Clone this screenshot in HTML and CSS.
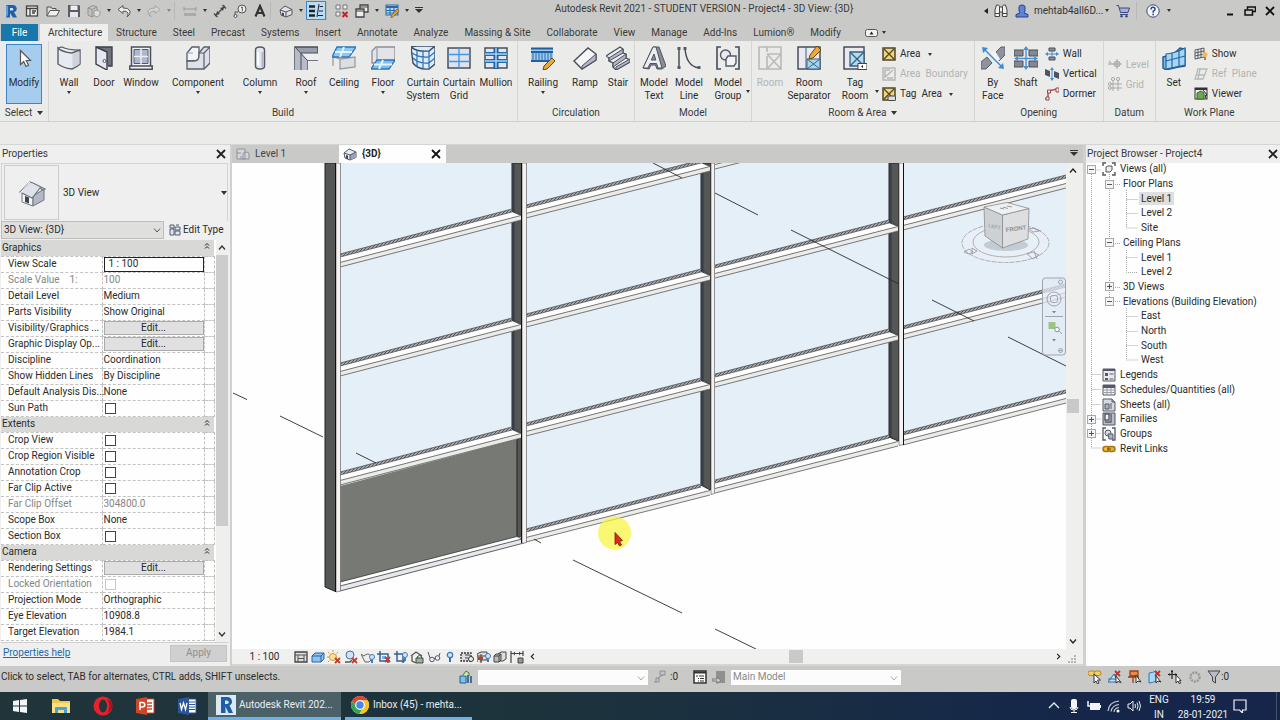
FILE: index.html
```html
<!DOCTYPE html>
<html lang="en">
<head>
<meta charset="utf-8">
<title>Autodesk Revit 2021</title>
<link rel="stylesheet" href="styles.css">
</head>
<body>
<header class="titlebar">
  <div class="qat">
    <button class="q w22" aria-label="Revit"><svg class="i16" viewBox="0 0 16 16"><path d="M3 2h6.500a4 3.600 0 0 1 1.500 7l3 5.500h-4L7 10v4.500H3z" fill="#1d5fa8"/><path d="M7 5h2a1.200 1.200 0 0 1 0 2.500H7z" fill="#cfe3f4"/><path d="M3 2v12.500L5 12V3z" fill="#5ea0dc"/></svg></button>
    <button class="q w20" aria-label="Home"><svg class="i14" viewBox="0 0 14 14"><rect x="1.500" y="2" width="11" height="10" fill="#eee" stroke="#444" stroke-width="1.300"/><path d="M1 4.500h12M5 4.500V12M7 7h4M7 9h3" stroke="#444" stroke-width="1.300"/></svg></button>
    <button class="q w22" aria-label="Open"><svg class="i14" viewBox="0 0 14 14"><path d="M1 12V3h4l1 1.500h4V7" fill="#ddd" stroke="#555"/><path d="M1 12l3-5.500h9.500L10.500 12z" fill="#f2f2f2" stroke="#555"/></svg></button>
    <button class="q w20" aria-label="Save"><svg class="i14" viewBox="0 0 14 14"><path d="M1 1h11l1 1v11H1z" fill="#5a5d66"/><rect x="3.500" y="1.500" width="7" height="4.500" fill="#eee"/><rect x="3" y="8" width="8" height="5" fill="#e8e8e8"/></svg></button>
    <button class="q w20" aria-label="Synchronize"><svg class="i14" viewBox="0 0 14 14"><path d="M1 4l5-2.500 4 1.500v7l-5 3-4-2zM1 4l4 1.500L10 3M5 5.500V13" fill="#c2c2c2" stroke="#929292"/><path d="M7 7l3-1 3 1.500V11l-3 2-3-1.500z" fill="#ddd" stroke="#999"/></svg></button>
    <button class="q w10" aria-label="Synchronize options"><i class="dd"></i></button>
    <button class="q w20" aria-label="Undo"><svg class="i14" viewBox="0 0 14 14"><path d="M6 1.500L1 5.500l5 4V7.200q4-.7 5 1.800.6 1.700-1 4 4-2.500 3-6Q11.500 3.500 6 4z" fill="#eee" stroke="#555"/></svg></button>
    <button class="q w10" aria-label="Undo history"><i class="dd"></i></button>
    <button class="q w20" aria-label="Redo"><svg class="i14" viewBox="0 0 14 14"><path d="M8 1.500l5 4-5 4V7.200Q4 6.500 3 9q-.6 1.700 1 4-4-2.500-3-6Q2.500 3.500 8 4z" fill="#d3d3d3" stroke="#a6a6a6"/></svg></button>
    <button class="q w10" aria-label="Redo history"><i class="dd dim"></i></button>
    <span class="sep"></span>
    <button class="q w20" aria-label="Measure"><svg class="i14" viewBox="0 0 14 14"><path d="M1 5h12M1 3v4M13 3v4" stroke="#999"/><rect x="1" y="9" width="12" height="3" fill="#aaa"/></svg></button>
    <button class="q w10" aria-label="Measure options"><i class="dd"></i></button>
    <button class="q w20" aria-label="Aligned dimension"><svg class="i14" viewBox="0 0 14 14"><path d="M2 12L12 2M1 9.500L4.500 13M9.500 1L13 4.500" stroke="#444" stroke-width="1.300"/><path d="M3 11l1-4 3 3zM11 3l-1 4-3-3z" fill="#444"/></svg></button>
    <button class="q w20" aria-label="Tag by category"><svg class="i14" viewBox="0 0 14 14"><circle cx="9" cy="5" r="4" fill="#eee" stroke="#555"/><path d="M8 3.500L9.300 3v4.500M5 8L2 8v4" fill="none" stroke="#555"/><circle cx="2.500" cy="12" r="1.500" fill="#eee" stroke="#555"/></svg></button>
    <button class="q w20" aria-label="Text"><svg class="i14" viewBox="0 0 14 14"><path d="M2.500 12.500L7 2l4.500 10.500M4.200 9h5.600" fill="none" stroke="#333" stroke-width="2.200"/></svg></button>
    <span class="sep"></span>
    <button class="q w20" aria-label="Default 3D view"><svg class="i14" viewBox="0 0 14 14"><path d="M1 6l5-4 7 3.500v5L7 13l-5-2z" fill="#dfe1e8" stroke="#555"/><path d="M1 6l6 2 6-2.500M7 8v5" fill="none" stroke="#555"/><path d="M3 8.500l2 .7v3l-2-.7z" fill="#444"/></svg></button>
    <button class="q w10" aria-label="View options"><i class="dd"></i></button>
    <button class="q w20 boxed" aria-label="Thin lines"><svg class="i16" viewBox="0 0 16 16"><path d="M1 3.500h6M1 8h6M1 12.500h6" stroke="#222" stroke-width="2.500"/><path d="M9 14L11 1M11.500 3.500H15M11 8h4M10 12.500h5" stroke="#223" fill="none"/></svg></button>
    <span class="sep"></span>
    <button class="q w20" aria-label="Close inactive views"><svg class="i14" viewBox="0 0 14 14"><path d="M1 1h4v4H1zM8 1h4v4H8zM1 8h4v4H1z" fill="#eee" stroke="#777"/><path d="M7.500 8l5 5M12.500 8l-5 5" stroke="#c4252b" stroke-width="2"/></svg></button>
    <button class="q w20" aria-label="Switch windows"><svg class="i14" viewBox="0 0 14 14"><path d="M5 1h8v7H5z" fill="#eee" stroke="#444" stroke-width="1.300"/><path d="M1 5h8v8H1z" fill="#eee" stroke="#444" stroke-width="1.300"/><path d="M1 7h8M5 3h8" stroke="#444"/></svg></button>
    <button class="q w10" aria-label="Window list"><i class="dd"></i></button>
    <button class="q w20" aria-label="Schedule"><svg class="i14" viewBox="0 0 14 14"><rect x="1" y="1" width="12" height="10" fill="#b9d7f2" stroke="#2b68a8"/><path d="M1 3h12" stroke="#2b68a8" stroke-width="2"/><path d="M1 6.500h12M1 9h12M5 3v8M9 3v8" stroke="#2b68a8"/><path d="M12 5l2 2-6 6-2 1 .5-2.500z" fill="#e5a23a" stroke="#754c12" stroke-width=".6"/></svg></button>
    <button class="q w10" aria-label="Schedule options"><i class="dd"></i></button>
    <button class="q w14" aria-label="Customize toolbar"><i class="dd bar"></i></button>
  </div>
  <h1 class="title">Autodesk Revit 2021 - STUDENT VERSION - Project4 - 3D View: {3D}</h1>
  <div class="account">
    <button class="q w8" aria-label="Collapse search"><i class="ddl"></i></button>
    <button class="q w22" aria-label="Search"><svg class="i14" viewBox="0 0 14 14"><path d="M1 6l1.500-5h2L6 3h2l1.500-2h2L13 6v6.500H8.500V8h-3v4.500H1z" fill="#f0f0f0" stroke="#444"/><path d="M1 9.500h4.500M8.500 9.500H13M5.500 3v5M8.500 3v5" stroke="#444"/></svg></button>
    <button class="q w20" aria-label="Account"><svg class="i14" viewBox="0 0 14 14"><path d="M1 13v-2.500l4-1.500-1-2V3q0-2 3-2t3 2v4L9 9l4 1.500V13z" fill="#5f83d8" stroke="#27408a"/></svg></button>
    <button class="user">mehtab4all6D...<i class="dd"></i></button>
    <button class="q w26" aria-label="App store"><svg class="i14" viewBox="0 0 14 14"><path d="M.5 1.500h2l2 7H12L13.500 4H3.500" fill="#a8b0d8" stroke="#3b4a80"/><path d="M4 10.500h8" stroke="#3b4a80"/><circle cx="5.500" cy="12.300" r="1.200" fill="#3b4a80"/><circle cx="10.500" cy="12.300" r="1.200" fill="#3b4a80"/></svg></button>
    <span class="sep"></span>
    <button class="q w22" aria-label="Help"><svg class="i14" viewBox="0 0 14 14"><circle cx="7" cy="7" r="6.200" fill="#f2f4fa" stroke="#3a4a72"/><path d="M5 5.500Q5 3.300 7 3.300T9 5.300Q9 6.500 7.200 7.200V8.700" fill="none" stroke="#2d4488" stroke-width="1.500"/><rect x="6.400" y="9.700" width="1.600" height="1.600" fill="#2d4488"/></svg></button>
    <button class="q w10" aria-label="Help options"><i class="dd"></i></button>
  </div>
  <div class="wctl">
    <button class="q w20" aria-label="Minimize"><svg class="i12" viewBox="0 0 12 12"><path d="M3 9.500h6" stroke="#111" stroke-width="2"/></svg></button>
    <button class="q w20" aria-label="Restore"><svg class="i12" viewBox="0 0 12 12"><path d="M3.500 4.500V2h8v4.500H9" fill="none" stroke="#111" stroke-width="1.500"/><rect x="1" y="5" width="7.500" height="5" fill="none" stroke="#111" stroke-width="1.500"/></svg></button>
    <button class="q w20" aria-label="Close"><svg class="i12" viewBox="0 0 12 12"><path d="M2 2l8 8M10 2l-8 8" stroke="#111" stroke-width="1.800"/></svg></button>
  </div>
</header>
<nav class="tabs">
  <button class="tab file">File</button><button class="tab active">Architecture</button><button class="tab">Structure</button><button class="tab">Steel</button><button class="tab">Precast</button><button class="tab">Systems</button><button class="tab">Insert</button><button class="tab">Annotate</button><button class="tab">Analyze</button><button class="tab">Massing &amp; Site</button><button class="tab">Collaborate</button><button class="tab">View</button><button class="tab">Manage</button><button class="tab">Add-Ins</button><button class="tab">Lumion®</button><button class="tab">Modify</button>
  <button class="q ribmin" aria-label="Minimize ribbon"><svg class="ribi" viewBox="0 0 13 8"><rect x=".5" y=".5" width="12" height="7" rx="2" fill="#f4f4f4" stroke="#555"/><path d="M4.500 5.500l2-3 2 3z" fill="#222"/></svg><i class="dd"></i></button>
</nav>
<section class="ribbon">
  <div class="panel select">
    <div class="tools">
      <button class="big modify"><svg class="i24" viewBox="0 0 24 24"><path d="M8.500 4.500v14l3.200-3 2.300 5 2.500-1.200-2.300-4.800h4.300z" fill="#fff" stroke="#555" stroke-width="1.200"/></svg>Modify</button>
    </div>
    <div class="ptitle">Select<i class="dd lg"></i></div>
  </div>
  <div class="panel">
    <div class="tools">
      <button class="big w38"><svg class="i24" viewBox="0 0 24 24"><path d="M1 2q4 4 14 5l8-3v14q-3 3-8 5-9-1-14-5z" fill="#e9eaef" stroke="#5a5e6a" stroke-width="1.400"/><path d="M1 2l4-1q5 3 18 3" fill="none" stroke="#5a5e6a" stroke-width="1.200"/><path d="M15.500 8l7-2.500V18l-7 4z" fill="#cfd2db"/></svg>Wall<i class="dd"></i></button>
      <button class="big w32"><svg class="i24" viewBox="0 0 24 24"><path d="M4 1h16v19h-4" fill="#70737d" stroke="#3d404a" stroke-width="1.400"/><path d="M4 1l11 5v18L4 18z" fill="#e6e8ef" stroke="#3d404a" stroke-width="1.400"/><circle cx="12.500" cy="15" r="1.500" fill="#fff" stroke="#555"/></svg>Door</button>
      <button class="big w42"><svg class="i24" viewBox="0 0 24 24"><path d="M2.500 1h19v19h-19zM.8 20h22.400v3.200H.8z" fill="#f2f3f6" stroke="#4a4e5a" stroke-width="1.500"/><path d="M5 3.500h14v14H5z" fill="#adb8d0" stroke="#555b6b"/><path d="M12 3v15M5 10.500h14" stroke="#eceef4" stroke-width="1.500"/></svg>Window</button>
      <button class="big w72"><svg class="i24" viewBox="0 0 24 24"><path d="M1 7l5-6h7v9q0 5-5 5H1z" fill="#f3f4f7" stroke="#5a5e6a" stroke-width="1.300"/><path d="M1 15h7q5 0 5-5V7l5-6h6v16l-6 6H1z" fill="#dfe1e8" stroke="#5a5e6a" stroke-width="1.300"/><path d="M18 23V7h-5M18 7l6-6" fill="none" stroke="#5a5e6a" stroke-width="1.200"/><path d="M1 7h6" stroke="#9a9eaa"/></svg>Component<i class="dd"></i></button>
      <button class="big w52"><svg class="i24" viewBox="0 0 24 24"><path d="M7.500 4q0-3 4.500-3t4.500 3v16q0 3-4.500 3t-4.500-3z" fill="#e5e7ee" stroke="#565a66" stroke-width="1.500"/><path d="M10 6v13" stroke="#fff" stroke-width="2"/><path d="M14.500 6v15" stroke="#b2b6c4" stroke-width="2"/></svg>Column<i class="dd"></i></button>
      <button class="big w40"><svg class="i24" viewBox="0 0 24 24"><path d="M1 1h23v13H13v10H1z" fill="#9a9eac" stroke="#4a4e5a" stroke-width="1.500"/><path d="M1 1l6 6v17H1zM13 14v10H7V7z" fill="#b9bcc8"/><path d="M7 7h17v7H13z" fill="#eceef2"/><path d="M1 1l12 13M7 7v17M7 7h17" fill="none" stroke="#4a4e5a"/></svg>Roof<i class="dd"></i></button>
      <button class="big w36"><svg class="i24" viewBox="0 0 24 24"><path d="M1 11l7 2 15-2v10l-15 2V13M1 11v9" fill="#dcdee2" stroke="#9a9da6" stroke-width="1.300"/><path d="M5 1h19l-7 10H0z" fill="#8cc8ef" stroke="#2d74b8" stroke-width="1.300"/><path d="M3 6h17M12 1L8 11" stroke="#e4f4fd" stroke-width="2"/></svg>Ceiling</button>
      <button class="big w42"><svg class="i24" viewBox="0 0 24 24"><path d="M5 1h19v14L18 17H1V5z" fill="#e3e4e7" stroke="#8b8e98" stroke-width="1.300"/><path d="M6 2v14" stroke="#8b8e98"/><path d="M6 14h18l-6 9H0z" fill="#7fbdec" stroke="#2d74b8" stroke-width="1.300"/><path d="M3 18.500h18M12 14l-4 9" stroke="#e4f4fd" stroke-width="2"/></svg>Floor<i class="dd"></i></button>
      <button class="big w38"><svg class="i24" viewBox="0 0 24 24"><path d="M0 1l5-1h19v18l-6 5q-11 1-16-6z" fill="#dcecfa" stroke="#3a4c66" stroke-width="1.400"/><path d="M0 1q6 5 18 4l6-5" fill="none" stroke="#3a4c66" stroke-width="1.400"/><path d="M1 7q7 5 17 4l6-5M2 12q6 6 16 5l6-5M6 4v17M12 5v18M18 5v18" fill="none" stroke="#2b6fb5" stroke-width="1.200"/></svg>Curtain<br>System</button>
      <button class="big w34"><svg class="i24" viewBox="0 0 24 24"><rect x="1" y="2" width="22" height="20" fill="#dfe2ea" stroke="#4a4e5a" stroke-width="1.500"/><path d="M12 2v20M1 8.500h22M1 15.500h22" stroke="#3f9be8" stroke-width="1.400"/></svg>Curtain<br>Grid</button>
      <button class="big w40"><svg class="i24" viewBox="0 0 24 24"><rect x="1" y="2" width="22" height="20" fill="#e3e6ee" stroke="#4a4e5a" stroke-width="1.500"/><path d="M1 8h22M1 15h22" stroke="#1f6ab0" stroke-width="4"/><path d="M12 2v21" stroke="#1f5f9c" stroke-width="5"/><path d="M12 2v20M1 8h22M1 15h22" stroke="#a5d4f5" stroke-width="1.500"/></svg>Mullion</button>
    </div>
    <div class="ptitle">Build</div>
  </div>
  <div class="panel">
    <div class="tools">
      <button class="big w48"><svg class="i24" viewBox="0 0 24 24"><path d="M0 2h22v14H0z" fill="#9cc9ee"/><path d="M0 2.500h22M0 6h22M0 15h22" stroke="#215e9e" stroke-width="2"/><path d="M2 6v9M5 6v9M8 6v9M11 6v9M14 6v9M17 6v9M20 6v9" stroke="#2b6db0"/><path d="M21 12l3 3-8 8-4 1 1-4z" fill="#eda932" stroke="#6b4513"/></svg>Railing<i class="dd"></i></button>
      <button class="big w36"><svg class="i24" viewBox="0 0 24 24"><path d="M1 15L15 2l8 6v6L9 23z" fill="#f4f5f7" stroke="#4a4e5a" stroke-width="1.400"/><path d="M9 23v-3L23 8v6z" fill="#b2b6c2" stroke="#4a4e5a"/></svg>Ramp</button>
      <button class="big w30"><svg class="i24" viewBox="0 0 24 24"><path d="M0 10l14-9 3 2v4l3 1v4l4 2v2L10 24l-3-3v-4l-4-2v-3z" fill="#eceef3" stroke="#4a4e5a" stroke-width="1.300"/><path d="M3 12L17 3v4L3 15zM7 17l13-9v4L7 21zM10 24v-3l14-8v3z" fill="#b4b8c4" stroke="#4a4e5a"/></svg>Stair</button>
    </div>
    <div class="ptitle">Circulation</div>
  </div>
  <div class="panel">
    <div class="tools">
      <button class="big w36"><svg class="i24" viewBox="0 0 24 24"><path d="M1 22L11 1h6l7 19-4 3h-5l-1.500-4H9l-2 4z" fill="#8a8e99" stroke="#4f535e"/><path d="M1 22L11 1h3l6 21h-4l-1.500-4.500H8L6 22zM9.300 14h4.500L12 8z" fill="#eceef2" stroke="#4f535e"/></svg>Model<br>Text</button>
      <button class="big w34"><svg class="i24" viewBox="0 0 24 24"><path d="M2 2v20M8 2q1 18 14 20" fill="none" stroke="#484c58" stroke-width="1.500"/><path d="M.5 1h3v3h-3zM.5 20h3v3h-3zM6.500 1h3v3h-3zM20.500 20h3v3h-3z" fill="#555a66"/></svg>Model<br>Line</button>
      <button class="big w44 side"><svg class="i24" viewBox="0 0 24 24"><path d="M5 1H1v22h4M19 1h4v22h-4" fill="none" stroke="#484c58" stroke-width="1.600"/><circle cx="9.500" cy="9" r="5" fill="#e8eaf0" stroke="#555a66" stroke-width="1.400"/><path d="M10 13l2-3h8v7l-2 3h-8z" fill="#f2f3f6" stroke="#555a66" stroke-width="1.400"/></svg>Model<br>Group<i class="dd"></i></button>
    </div>
    <div class="ptitle">Model</div>
  </div>
  <div class="panel">
    <div class="tools">
      <button class="big w34" disabled><svg class="i24" viewBox="0 0 24 24"><path d="M1 1h22v22H1zM9 1v5M9 10v13M9 8h14M9 8l14 15M23 8L9 23" fill="none" stroke="#b9bab9" stroke-width="1.600"/></svg>Room</button>
      <button class="big w44"><svg class="i24" viewBox="0 0 24 24"><path d="M1 1h22v22H1z" fill="#e8eaef" stroke="#4a4e5a" stroke-width="1.500"/><path d="M10 13h13v10H10z" fill="#a8d4ee" stroke="#3c6080"/><path d="M10 13l13 10M23 13L10 23M9 1v22" stroke="#3c6080"/><path d="M20 0l4 4-8 8-4 1 1-4z" fill="#eda932" stroke="#6b4513"/></svg>Room<br>Separator</button>
      <button class="big w48 side"><svg class="i24" viewBox="0 0 24 24"><path d="M1 1h20v22H1z" fill="#e8eaef" stroke="#4a4e5a" stroke-width="1.500"/><path d="M7 6h14v14H7z" fill="#b5dbf2" stroke="#35607e" stroke-width="1.300"/><path d="M7 6l14 14M21 6L7 20" stroke="#35607e" stroke-width="1.300"/><rect x="15" y="17.500" width="9" height="6" fill="#fff" stroke="#444"/><path d="M18 20.500l2-1.500v3z" fill="#222"/></svg>Tag<br>Room<i class="dd"></i></button>
      <div class="stack">
        <button class="small"><svg class="i14" viewBox="0 0 14 14"><path d="M1 1h12v12H1z" fill="#f5d573" stroke="#4c4630" stroke-width="1.500"/><path d="M2 2l10 10M12 2L2 12" stroke="#4c4630" stroke-width="1.300"/></svg>Area<i class="dd"></i></button>
        <button class="small" disabled><svg class="i14" viewBox="0 0 14 14"><path d="M1 1h12v12H1zM3 3h5M3 3v7l8-7M5 11h6" fill="none" stroke="#b7b8b7" stroke-width="1.500"/></svg>Area&nbsp; Boundary</button>
        <button class="small"><svg class="i14" viewBox="0 0 14 14"><path d="M1 1h12v12H1z" fill="#f5d573" stroke="#4c4630" stroke-width="1.500"/><path d="M2 2l10 10M12 2L2 12" stroke="#4c4630" stroke-width="1.300"/><rect x="6" y="9" width="7.500" height="4.500" rx="1" fill="#ddd" stroke="#444"/></svg>Tag&nbsp; Area<i class="dd"></i></button>
      </div>
    </div>
    <div class="ptitle">Room &amp; Area<i class="dd lg"></i></div>
  </div>
  <div class="panel">
    <div class="tools">
      <button class="big w34"><svg class="i24" viewBox="0 0 24 24"><path d="M15 6l5-5h4v8l-6 6-4-5zM0 16l6-5 5 6-6 6H0z" fill="#8e929c" stroke="#5b5f69"/><path d="M10 7l4-2 5 8-4 5z" fill="#f4f5f7"/><path d="M4 4l16 16" stroke="#3f8ad2" stroke-width="1.500"/><path d="M1 1l6 1-5 5zM23 23l-6-1 5-5z" fill="#3f8ad2"/></svg>By<br>Face</button>
      <button class="big w32"><svg class="i24" viewBox="0 0 24 24"><path d="M0 4h9v6H0zM15 4h9v6h-9zM0 15h9v6H0zM15 15h9v6h-9z" fill="#85898f" stroke="#4a4e5a"/><path d="M12 2v20M2 12.500h20" stroke="#4a90d6" stroke-width="1.400"/><path d="M12 0l3 4H9zM12 24l3-4H9zM0 12.500l4-2.500v5zM24 12.500l-4-2.500v5z" fill="#4a90d6"/></svg>Shaft</button>
      <div class="stack">
        <button class="small"><svg class="i14" viewBox="0 0 14 14"><path d="M4 1h6v3H4zM4 10h6v3H4z" fill="#8b8f97" stroke="#4a4e5a"/><path d="M2 7h10M7 4v6" stroke="#3f8ad2"/><path d="M0 7l3-2v4zM14 7l-3-2v4z" fill="#3f8ad2"/></svg>Wall</button>
        <button class="small"><svg class="i14" viewBox="0 0 14 14"><path d="M0 2l5 2v6L0 8zM9 4l5 2v6l-5-2z" fill="#50545e"/><path d="M7 2v10" stroke="#3f8ad2"/><path d="M7 0l2 3H5zM7 14l2-3H5z" fill="#3f8ad2"/></svg>Vertical</button>
        <button class="small"><svg class="i14" viewBox="0 0 14 14"><path d="M0 12h3M3 12V4l9-2" fill="none" stroke="#c2474a" stroke-width="1.500"/><path d="M1 10h3v3H1zM2.500 3h3v3h-3zM11 1h3v4h-3z" fill="#eee" stroke="#96494d"/></svg>Dormer</button>
      </div>
    </div>
    <div class="ptitle">Opening</div>
  </div>
  <div class="panel">
    <div class="tools">
      <div class="stack two">
        <button class="small" disabled><svg class="i14" viewBox="0 0 14 14"><path d="M0 7h6M1 4l2 2" stroke="#b7b8b7" stroke-width="1.500"/><circle cx="9" cy="7" r="3" fill="#c9c9c9" stroke="#a9aaa9"/><path d="M9 2v10M5 7h9" stroke="#a9aaa9"/></svg>Level</button>
        <button class="small" disabled><svg class="i14" viewBox="0 0 14 14"><path d="M5 3v11M10 3v11M2 7h12M2 11h12" stroke="#a9aaa9"/><circle cx="5" cy="2" r="1.600" fill="none" stroke="#a9aaa9"/><circle cx="10" cy="2" r="1.600" fill="none" stroke="#a9aaa9"/><circle cx="1.800" cy="7" r="1.500" fill="none" stroke="#a9aaa9"/><circle cx="1.800" cy="11" r="1.500" fill="none" stroke="#a9aaa9"/></svg>Grid</button>
      </div>
    </div>
    <div class="ptitle">Datum</div>
  </div>
  <div class="panel last">
    <div class="tools">
      <button class="big w34"><svg class="i24" viewBox="0 0 24 24"><path d="M1 11q11-2 17-9l5 1v17q-8 1-19 4l-3-2z" fill="#76bbe8" stroke="#28568a" stroke-width="1.400"/><path d="M4 8q10-1 19-6v17L4 23zM4 15l19-5M10 7v15M17 5v15" fill="#a6d6f4" stroke="#28689f" stroke-width="1.200"/></svg>Set</button>
      <div class="stack">
        <button class="small"><svg class="i14" viewBox="0 0 14 14"><path d="M1 3l9-2v9l-9 2zM1 6l9-2M1 9l9-2M4 2v9M7 2v9" fill="#eee" stroke="#555a66"/><circle cx="11" cy="7.500" r="2.500" fill="#f4bd4b"/><path d="M10 10h2v3h-2z" fill="#888"/></svg>Show</button>
        <button class="small" disabled><svg class="i14" viewBox="0 0 14 14"><path d="M4 2h9L9 12H1zM3 8h7M6 2L4 12" fill="none" stroke="#b7b8b7" stroke-width="1.300"/></svg>Ref&nbsp; Plane</button>
        <button class="small"><svg class="i14" viewBox="0 0 14 14"><rect x="1" y="1" width="12" height="11" fill="#eee" stroke="#333"/><path d="M1 2h12" stroke="#333" stroke-width="2"/><path d="M3 6l4-2 3 2v6H3z" fill="#6da84f" stroke="#3c6a2a"/><path d="M9 3l4 5-2 .5 1 3" fill="none" stroke="#222"/></svg>Viewer</button>
      </div>
    </div>
    <div class="ptitle">Work Plane</div>
  </div>
</section>
<div class="options"></div>
<main class="work">
  <aside class="props">
    <div class="phead"><h2>Properties</h2><button class="q" aria-label="Close properties"><svg class="i12" viewBox="0 0 12 12"><path d="M2 2l8 8M10 2l-8 8" stroke="#222" stroke-width="1.800"/></svg></button></div>
    <button class="typesel">
      <span class="thumb"><svg class="i30" viewBox="0 0 30 30"><path d="M5 14l11 5v9L5 24z" fill="#f5f6f8" stroke="#70747e"/><path d="M16 18L27 11v11l-11 6z" fill="#b4b8c4" stroke="#70747e"/><path d="M3 14L13 4l3 1 12 6-2 1-3-2-7 9-1 1z" fill="#dfe2e8" stroke="#70747e" stroke-width="1.200"/><path d="M13 4l-9.500 10.500L5 15" fill="none" stroke="#fff"/><path d="M8 18l4 1.500v6L8 24z" fill="#40444e"/></svg></span>
      <span class="tname">3D View</span><i class="dd lg"></i>
    </button>
    <div class="pinst">
      <label class="combo"><select aria-label="Instance"><option>3D View: {3D}</option></select><svg class="chev" viewBox="0 0 8 6"><path d="M1 1l3 3.500L7 1" fill="none" stroke="#555"/></svg></label>
      <button class="edtype"><svg class="i12" viewBox="0 0 12 12"><path d="M1 1h4v3H1zM1 5h4v6H1zM6 3h5v3H6zM6 7h5v4H6zM7 1h3" fill="#e3e6f0" stroke="#555b70"/></svg>Edit Type</button>
    </div>
    <div class="pgrid">
      <table>
        <colgroup><col class="c1"><col class="c2"><col class="c3"></colgroup>
        <tbody>
        <tr class="grp"><th colspan="3">Graphics<svg class="up" viewBox="0 0 6 8"><path d="M1 3.500l2-2 2 2M1 6.500l2-2 2 2" fill="none" stroke="#222"/></svg></th></tr>
        <tr><th><label for="vs">View Scale</label></th><td><input id="vs" class="boxin" value="1 : 100"></td><td></td></tr>
        <tr class="off"><th>Scale Value &nbsp;&nbsp; 1:</th><td>100</td><td></td></tr>
        <tr><th>Detail Level</th><td>Medium</td><td></td></tr>
        <tr><th>Parts Visibility</th><td>Show Original</td><td></td></tr>
        <tr><th>Visibility/Graphics ...</th><td><button class="edit">Edit...</button></td><td></td></tr>
        <tr><th>Graphic Display Op...</th><td><button class="edit">Edit...</button></td><td></td></tr>
        <tr><th>Discipline</th><td>Coordination</td><td></td></tr>
        <tr><th>Show Hidden Lines</th><td>By Discipline</td><td></td></tr>
        <tr><th>Default Analysis Dis...</th><td>None</td><td></td></tr>
        <tr><th><label for="sp">Sun Path</label></th><td><input type="checkbox" id="sp"></td><td></td></tr>
        <tr class="grp"><th colspan="3">Extents<svg class="up" viewBox="0 0 6 8"><path d="M1 3.500l2-2 2 2M1 6.500l2-2 2 2" fill="none" stroke="#222"/></svg></th></tr>
        <tr><th><label for="cv">Crop View</label></th><td><input type="checkbox" id="cv"></td><td></td></tr>
        <tr><th><label for="crv">Crop Region Visible</label></th><td><input type="checkbox" id="crv"></td><td></td></tr>
        <tr><th><label for="ac">Annotation Crop</label></th><td><input type="checkbox" id="ac"></td><td></td></tr>
        <tr><th><label for="fc">Far Clip Active</label></th><td><input type="checkbox" id="fc"></td><td></td></tr>
        <tr class="off"><th>Far Clip Offset</th><td>304800.0</td><td></td></tr>
        <tr><th>Scope Box</th><td>None</td><td></td></tr>
        <tr><th><label for="sb">Section Box</label></th><td><input type="checkbox" id="sb"></td><td></td></tr>
        <tr class="grp"><th colspan="3">Camera<svg class="up" viewBox="0 0 6 8"><path d="M1 3.500l2-2 2 2M1 6.500l2-2 2 2" fill="none" stroke="#222"/></svg></th></tr>
        <tr><th>Rendering Settings</th><td><button class="edit">Edit...</button></td><td></td></tr>
        <tr class="off"><th><label for="lo">Locked Orientation</label></th><td><input type="checkbox" id="lo" disabled></td><td></td></tr>
        <tr><th>Projection Mode</th><td>Orthographic</td><td></td></tr>
        <tr><th>Eye Elevation</th><td>10908.8</td><td></td></tr>
        <tr><th>Target Elevation</th><td>1984.1</td><td></td></tr>
        </tbody>
      </table>
      <div class="vsb"><svg class="chev" viewBox="0 0 8 6"><path d="M1 5l3-3.500L7 5" fill="none" stroke="#333" stroke-width="1.300"/></svg><span class="pthumb"></span><svg class="chev" viewBox="0 0 8 6"><path d="M1 1l3 3.500L7 1" fill="none" stroke="#333" stroke-width="1.300"/></svg></div>
    </div>
    <div class="pfoot"><a href="#help">Properties help</a><button class="apply" disabled>Apply</button></div>
  </aside>
  <section class="view">
    <div class="vtabs">
      <button class="vtab"><svg class="i14" viewBox="0 0 14 14"><path d="M1 2h8v10H1zM1 6h4M5 9v3M7 7q0-2 3-2t3 2v5H7z" fill="#d4d6da" stroke="#8f939c"/></svg>Level 1</button>
      <button class="vtab on"><svg class="i14" viewBox="0 0 14 14"><path d="M1 6l5-4 7 3v5.500L7 13l-5-2z" fill="#e9ebf0" stroke="#555b6b"/><path d="M7 8l6-3v5.500L7 13z" fill="#9da3b5"/><path d="M1 6l6 2 6-3M7 8v5" fill="none" stroke="#555b6b"/><path d="M3 8l2 .7v3.500l-2-.7z" fill="#444"/></svg><b>{3D}</b><svg class="i12 x" viewBox="0 0 12 12"><path d="M2 2l8 8M10 2l-8 8" stroke="#111" stroke-width="1.800"/></svg></button>
      <button class="q w14 vmore" aria-label="View list"><i class="dd bar"></i></button>
    </div>
    <div class="stage">
      <svg class="model" viewBox="232 163 834 486" preserveAspectRatio="xMinYMin slice">
        <defs>
          <pattern id="hatch" width="3" height="3" patternUnits="userSpaceOnUse"><rect width="3" height="3" fill="#a4a9af"/><path d="M0 3L3 0" stroke="#50545a" stroke-width=".9"/></pattern>
          <g id="r1"><path d="M340 0L512-45V-42L521-38V-34L340 13z" fill="#fff"/><path d="M340 8L521-39V-34L340 13z" fill="#ebebe9"/><path d="M340 0L512-45V-42L340 3z" fill="url(#hatch)"/><path d="M340 0L512-45L521-39M340 8.500L521-38.500M340 13L521-34M340 3L512-42" fill="none" stroke="#444" stroke-width=".7"/></g>
          <g id="r2"><path d="M526 0L701-45V-42L710-38V-34L526 13z" fill="#fff"/><path d="M526 8L710-39V-34L526 13z" fill="#ebebe9"/><path d="M526 0L701-45V-42L526 3z" fill="url(#hatch)"/><path d="M526 0L701-45L710-39M526 8.500L710-38.500M526 13L710-34M526 3L701-42" fill="none" stroke="#444" stroke-width=".7"/></g>
          <g id="r3"><path d="M715 0L889-45V-42L898-38V-34L715 13z" fill="#fff"/><path d="M715 8L898-39V-34L715 13z" fill="#ebebe9"/><path d="M715 0L889-45V-42L715 3z" fill="url(#hatch)"/><path d="M715 0L889-45L898-39M715 8.500L898-38.500M715 13L898-34M715 3L889-42" fill="none" stroke="#444" stroke-width=".7"/></g>
          <g id="r4"><path d="M903 0L1066-42V-29L903 13z" fill="#fff"/><path d="M903 8L1066-34V-29L903 13z" fill="#ebebe9"/><path d="M903 0L1066-42V-39L903 3z" fill="url(#hatch)"/><path d="M903 0L1066-42M903 8.500L1066-33.500M903 13L1066-29M903 3L1066-39" fill="none" stroke="#444" stroke-width=".7"/></g>
        </defs>
        <rect x="232" y="163" width="2400" height="1400" fill="#fdfefd"/>
        <path d="M336 163H1066V395L526 536V440L336 486z" fill="#e4eff7"/>
        <path d="M340 486L521 438V536L340 584z" fill="#777975"/>
        <g stroke="#222" stroke-width="1">
          <path d="M325 163H335.500V591.500L325 587z" fill="#555756"/>
          <path d="M512 163H521.500V438H512zM517 438H521.500V538L517 536z" fill="#555756"/>
          <path d="M701 163H710.500V490L701 485z" fill="#555756"/>
          <path d="M889 163H898.500V441L889 437z" fill="#555756"/>
        </g>
        <path d="M702.500 163V486M890.500 163V438M513.500 163V436" stroke="#343d48" stroke-width="2"/>
        <use href="#r1" y="254"/><use href="#r1" y="363"/><use href="#r1" y="472"/>
        <use href="#r2" y="205"/><use href="#r2" y="314"/><use href="#r2" y="423"/><use href="#r2" y="529"/>
        <use href="#r3" y="156"/><use href="#r3" y="265"/><use href="#r3" y="374"/><use href="#r3" y="480"/>
        <use href="#r4" y="217"/><use href="#r4" y="326"/><use href="#r4" y="432"/>
        <path d="M340 582L517 536.500L524 538V543L340 591z" fill="#fff"/>
        <path d="M340 586L524 538.500V543L340 591z" fill="#e6e8ec"/>
        <path d="M340 582L517 536.500L522 539M340 586L522 539M340 591L524 543" fill="none" stroke="#222" stroke-width=".7"/>
        <g fill="#f4f1f0" stroke="#666" stroke-width=".7">
          <path d="M336 163H340.500V591L336 592z"/><path d="M522 163H526.500V542.500L522 543.500z"/><path d="M711 163H714.500V493.500L711 494.500z"/><path d="M899 163H903.500V444.500L899 445.500z"/>
        </g>
        <path d="M335.500 163V592M521.500 163V543M903.500 163V445" stroke="#111"/>
        <path d="M233 393l14 6.500M280 416l43 21M356 453l20 10M534 539l7 4M573 560l109 53M715 629l41 20M653 163l29 15M715 193l43 22M791 230l108 54M932 300l42 21M1008 337l58 29" stroke="#2a2a2a" stroke-width=".9" fill="none"/>
        <g fill="none" stroke="#a6a8ad" stroke-width=".9">
          <ellipse cx="1005.500" cy="243" rx="43.500" ry="19.500" fill="#eceef5" fill-opacity=".7" stroke-dasharray="5 1"/>
          <ellipse cx="1006" cy="242" rx="33" ry="15" fill="#e7f0f7"/>
          <path d="M964 252l5-3 4 3-4 2zM972 248l5 3-5 3zM1027 254l6-2 6 3-6 4zM1034 251l3 8M1029 229l5-1 5 3-6 1zM1033 228l8 3" stroke="#9a9ca4"/>
        </g>
        <ellipse cx="1006" cy="245" rx="22" ry="6" fill="#b4bcc4" opacity=".7"/>
        <path d="M984 207L1002.500 215V248L985 236z" fill="#cdd1d4" stroke="#8a8d91" stroke-width=".8"/>
        <path d="M1002.500 215L1029 208.500L1028 239L1002.500 248z" fill="#dcdee0" stroke="#8a8d91" stroke-width=".8"/>
        <path d="M984 207L1007 202.500L1029 208.500L1002.500 215z" fill="#eef0f1" stroke="#8a8d91" stroke-width=".8"/>
        <path d="M1000 208l4 1M1003 207l5 1.500M1007 206l5 1" stroke="#999"/>
        <text class="cube" x="1006" y="232" transform="rotate(-8 1006 232)">FRONT</text>
        <text class="cube dimc" x="988" y="227" transform="rotate(12 988 227)">LEFT</text>
        <g fill="none" stroke="#9da3b0">
          <rect x="1042.500" y="278" width="23" height="77" rx="3" fill="#e3e9f4" fill-opacity=".75"/>
          <circle cx="1060.500" cy="282" r="2"/><circle cx="1060.500" cy="350.500" r="2"/><path d="M1059 350.500h3M1045 316.500h18"/>
          <circle cx="1054" cy="299" r="7"/><rect x="1050.500" y="295.500" width="7" height="7" rx="2"/>
          <path d="M1059 331l3 3"/>
        </g>
        <path d="M1048.500 322h7v7h-7z" fill="#9ac583"/><circle cx="1057" cy="329.500" r="2.300" fill="#f4f6f8" stroke="#8a909c"/>
        <path d="M1052 311h4l-2 2.500zM1052 339h4l-2 2.500z" fill="#808692"/>
        <circle cx="614.500" cy="533" r="16.500" fill="#f8f43c" fill-opacity=".72"/>
        <path d="M615 532.500v12l2.500-2 2 3.500 2-1-2-3.500 3-1z" fill="#e02a16" stroke="#7a1a10" stroke-width=".8"/>
      </svg>
      <div class="vsb wide"><svg class="chev" viewBox="0 0 8 6"><path d="M1 5l3-3.500L7 5" fill="none" stroke="#222" stroke-width="1.300"/></svg><span class="mthumb"></span><svg class="chev" viewBox="0 0 8 6"><path d="M1 1l3 3.500L7 1" fill="none" stroke="#222" stroke-width="1.300"/></svg></div>
    </div>
    <div class="vcb">
      <button class="scale">1 : 100</button>
      <div class="vicons">
        <button class="v" aria-label="Detail level"><svg class="i14" viewBox="0 0 14 14"><path d="M1 2h12v10H1z" fill="#ddd" stroke="#444" stroke-width="1.300"/><path d="M1 5h12M4 5v7M10 5v7M4 8.500h6" stroke="#555"/></svg></button>
        <button class="v" aria-label="Visual style"><svg class="i14" viewBox="0 0 14 14"><path d="M1 6l3-3h9v6l-3 3H1z" fill="#8ec3ee" stroke="#2b62a0"/><path d="M1 6h9v6M10 6l3-3" fill="none" stroke="#2b62a0"/></svg></button>
        <button class="v" aria-label="Sun path off"><svg class="i14" viewBox="0 0 14 14"><circle cx="6" cy="7" r="3.500" fill="#fbe39a" stroke="#d89a25"/><path d="M6 0v2M1 2l1.500 1.500M0 7h2M1 12l1.500-1.500M11 2L9.500 3.500" stroke="#d89a25"/><path d="M8 8l5 5M13 8l-5 5" stroke="#c33a2c" stroke-width="1.800"/></svg></button>
        <button class="v" aria-label="Shadows off"><svg class="i14" viewBox="0 0 14 14"><circle cx="6" cy="5" r="4" fill="#cfe2f4" stroke="#446f9e"/><path d="M1 12h5l2-2" stroke="#555" fill="none" stroke-width="1.500"/><path d="M8 8l5 5M13 8l-5 5" stroke="#c33a2c" stroke-width="1.800"/></svg></button>
        <button class="v" aria-label="Rendering"><svg class="i14" viewBox="0 0 14 14"><path d="M0 4l3 2q4-4 7 0v4l-2 2H4L2 8z" fill="#eee" stroke="#666"/><circle cx="11" cy="7" r="2.500" fill="#cfe6fa" stroke="#3b7cc0"/><path d="M11 10v3" stroke="#3b7cc0" stroke-width="2"/></svg></button>
        <button class="v" aria-label="Crop view"><svg class="i14" viewBox="0 0 14 14"><path d="M3 1v10h10M0 4h11v9" fill="none" stroke="#3a5f90" stroke-width="1.500"/><path d="M5 6h4v3H5z" fill="#7db1e2"/><path d="M8 7l5 5M13 7l-5 5" stroke="#c33a2c" stroke-width="1.800"/></svg></button>
        <button class="v" aria-label="Crop region"><svg class="i14" viewBox="0 0 14 14"><path d="M3 1v10h8M0 4h9v9" fill="none" stroke="#3a5f90" stroke-width="1.500"/><circle cx="11" cy="5" r="2.500" fill="#cfe6fa" stroke="#3b7cc0"/><path d="M11 8v3" stroke="#3b7cc0" stroke-width="2"/></svg></button>
        <button class="v" aria-label="Lock 3D view"><svg class="i14" viewBox="0 0 14 14"><path d="M1 6l5-4 6 4M2 6v5l4 2" fill="#eee" stroke="#555" stroke-width="1.300"/><path d="M6 8h7v5H6z" fill="#9bb69a" stroke="#444"/><path d="M7.500 8V6.500q2-2 4 0V8" fill="none" stroke="#444"/></svg></button>
        <button class="v" aria-label="Temporary hide"><svg class="i14" viewBox="0 0 14 14"><circle cx="5" cy="9.500" r="2.300" fill="#eef" stroke="#556"/><circle cx="10.500" cy="8" r="2.300" fill="#eef" stroke="#556"/><path d="M3 8L1 2M12 6l1-3M7 9l1-1" stroke="#556"/></svg></button>
        <button class="v" aria-label="Reveal hidden"><svg class="i14" viewBox="0 0 14 14"><circle cx="7" cy="5" r="2.700" fill="#cfe6fa" stroke="#3b7cc0" stroke-width="1.300"/><path d="M7 8v4" stroke="#3b6fae" stroke-width="2"/></svg></button>
        <button class="v" aria-label="View properties"><svg class="i14" viewBox="0 0 14 14"><path d="M1 3h10v8H1z" fill="#ddd" stroke="#333" stroke-width="1.300" stroke-dasharray="2 1"/><path d="M5 5h5M5 8h3" stroke="#444"/><circle cx="11" cy="9" r="2.500" fill="#eee" stroke="#333"/></svg></button>
        <button class="v" aria-label="Analytical model"><svg class="i14" viewBox="0 0 14 14"><path d="M0 12V4l4-2h6v8H4v3M0 6h8M4 4v8" fill="#ddd" stroke="#444"/><path d="M1 7h5v3H1z" fill="#c33a2c"/><circle cx="11" cy="6" r="2.500" fill="#cfe6fa" stroke="#3b7cc0"/><path d="M11 9v3" stroke="#3b7cc0" stroke-width="2"/></svg></button>
        <button class="v" aria-label="Displacement sets"><svg class="i14" viewBox="0 0 14 14"><path d="M5 4l3-2h5v7l-3 2H5z" fill="#ddd" stroke="#444"/><path d="M1 6l2-2h5v6l-2 2H1z" fill="#bbb" stroke="#444"/><path d="M1 6h5v6M6 6l2-2" fill="none" stroke="#444"/></svg></button>
        <button class="v" aria-label="Constraints"><svg class="i14" viewBox="0 0 14 14"><path d="M1 1v12M13 1v5M1 3.500h12" stroke="#444" stroke-width="1.200"/><path d="M3 3.500l2-2v4zM11 3.500l-2-2v4z" fill="#444"/><path d="M8 8h5v5H8z" fill="#999" stroke="#444"/></svg></button>
      </div>
      <div class="hsb"><svg class="chev" viewBox="0 0 8 8"><path d="M5 1L2 4l3 3" fill="none" stroke="#222" stroke-width="1.300"/></svg><span class="hthumb"></span><svg class="chev" viewBox="0 0 8 8"><path d="M3 1l3 3-3 3" fill="none" stroke="#222" stroke-width="1.300"/></svg></div>
      <svg class="i14 grip" viewBox="0 0 14 14"><path d="M9 5h2v2H9zM9 8h2v2H9zM6 8h2v2H6zM9 11h2v2H9zM6 11h2v2H6zM3 11h2v2H3z" fill="#b5b5b5"/></svg>
    </div>
  </section>
  <aside class="browser">
    <div class="phead"><h2>Project Browser - Project4</h2><button class="q" aria-label="Close browser"><svg class="i12" viewBox="0 0 12 12"><path d="M2 2l8 8M10 2l-8 8" stroke="#222" stroke-width="1.800"/></svg></button></div>
    <div class="treebox">
    <svg class="guides" viewBox="2 0 194 294"><g fill="none" stroke="#a8a8a8" stroke-dasharray="1 1"><path d="M7.500 12V286M7.500 8H17M25.500 12V139.500M25 22.500H37M25 81.500H37M25 125.500H37M25 139.500H37M42.500 28V66H54M42.500 37.500H54M42.500 51.500H54M42.500 88V110.500H54M42.500 95.500H54M42.500 146V198H54M42.500 154.500H54M42.500 169.500H54M42.500 183.500H54M7.500 212.500H17M7.500 227.500H17M7.500 242.500H17M7.500 257H17M7.500 271.500H17M7.500 286H17"/></g></svg>
    <ul class="tree">
      <li class="d0"><i class="pm"></i><svg class="i14" viewBox="0 0 14 14"><path d="M1 4V1h3M10 1h3v3M1 10v3h3M10 13h3v-3" fill="none" stroke="#555" stroke-width="1.400"/><path d="M4 5l2-1h4v4l-2 2H4z" fill="#eee" stroke="#555"/></svg>Views (all)</li>
      <li class="d1"><i class="pm"></i>Floor Plans</li>
      <li class="d2"><span class="sel">Level 1</span></li>
      <li class="d2">Level 2</li>
      <li class="d2">Site</li>
      <li class="d1"><i class="pm"></i>Ceiling Plans</li>
      <li class="d2">Level 1</li>
      <li class="d2">Level 2</li>
      <li class="d1"><i class="pm plus"></i>3D Views</li>
      <li class="d1"><i class="pm"></i>Elevations (Building Elevation)</li>
      <li class="d2">East</li>
      <li class="d2">North</li>
      <li class="d2">South</li>
      <li class="d2">West</li>
      <li class="d0 leaf"><svg class="i14" viewBox="0 0 14 14"><path d="M1 1h12v12H1z" fill="#e8e9ee" stroke="#555a66"/><path d="M1 2h12" stroke="#555a66" stroke-width="2"/><path d="M3 5h3v3H3zM3 10h3v2H3z" fill="#555a66"/><path d="M7.500 6h4M7.500 11h4" stroke="#555a66"/></svg>Legends</li>
      <li class="d0 leaf"><svg class="i14" viewBox="0 0 14 14"><path d="M1 2h12v10H1z" fill="#f4f4f6" stroke="#555a66"/><path d="M1 3.500h12" stroke="#555a66" stroke-width="3"/><path d="M1 7h12M1 9.500h12M5 5v7M9 5v7" stroke="#9a9eaa"/></svg>Schedules/Quantities (all)</li>
      <li class="d0 leaf"><svg class="i14" viewBox="0 0 14 14"><path d="M1 1h9l3 3v9H1z" fill="#d5d9e2" stroke="#555a66"/><path d="M3 6h4v5H3zM9 5v6M10 1v3h3" fill="#aab2c4" stroke="#555a66"/></svg>Sheets (all)</li>
      <li class="d0"><i class="pm plus"></i><svg class="i14" viewBox="0 0 14 14"><path d="M1 1h12v12H1z" fill="#b9bdc8" stroke="#555a66"/><path d="M3 2h4v6H3zM9 2v8H3" fill="#f4f4f6" stroke="#555a66" stroke-width="1.400"/></svg>Families</li>
      <li class="d0"><i class="pm plus"></i><svg class="i14" viewBox="0 0 14 14"><path d="M4 1H1v12h3M10 1h3v12h-3" fill="none" stroke="#555a66" stroke-width="1.300"/><circle cx="6" cy="6" r="3" fill="#d5d9e2" stroke="#555a66"/><path d="M6 7h5v5H7z" fill="#aab2c4" stroke="#555a66"/></svg>Groups</li>
      <li class="d0 leaf"><svg class="i14" viewBox="0 0 14 14"><rect x="1" y="4.500" width="7" height="5" rx="2.500" fill="#f0c030" stroke="#a87410" stroke-width="1.500"/><rect x="6" y="4.500" width="7" height="5" rx="2.500" fill="#e0b040" stroke="#a87410" stroke-width="1.500"/><path d="M5 7h4" stroke="#6e4c0c"/></svg>Revit Links</li>
    </ul>
    </div>
  </aside>
</main>
<footer class="status">
  <span class="msg">Click to select, TAB for alternates, CTRL adds, SHIFT unselects.</span>
  <svg class="i14" viewBox="0 0 14 14"><path d="M1 6h6v7H1z" fill="#7fc0ea" stroke="#1f5e94"/><path d="M4 5l3-4 3 2v3" fill="#cde8a8" stroke="#3c7a3a"/><path d="M9 5v8M12 6v7" stroke="#1f4f84" stroke-width="1.500"/></svg>
  <label class="combo s1"><select aria-label="Active workset"><option></option></select><svg class="chev" viewBox="0 0 8 6"><path d="M1 1l3 3.500L7 1" fill="none" stroke="#aaa"/></svg></label>
  <svg class="i14 gapl" viewBox="0 0 14 14"><path d="M1 12h5V7l4-2M3 12V8h3M7 1h5v4H7z" fill="#c4c4c4" stroke="#8e8e8e"/></svg>
  <span class="zero">:0</span>
  <svg class="i14 gapm" viewBox="0 0 14 14"><path d="M1 1h12v12H1z" fill="#fff" stroke="#333" stroke-width="1.500"/><path d="M1 2.500h12" stroke="#333" stroke-width="2"/><path d="M3 6h2M6 6h5M5 8.500h1M7 8.500h4M5 11h1M7 11h4" stroke="#333"/></svg>
  <svg class="i14 gapl" viewBox="0 0 14 14"><path d="M4 1h9v12H4z" fill="#8f918f"/><path d="M0 9h5v-2l4 3.500-4 3V11H0z" fill="#c9cac8" stroke="#7a7a7a"/></svg>
  <label class="combo s2"><select aria-label="Design option"><option>Main Model</option></select><svg class="chev" viewBox="0 0 8 6"><path d="M1 1l3 3.500L7 1" fill="none" stroke="#aaa"/></svg></label>
  <div class="selopts">
    <button class="q w20" aria-label="Select links"><svg class="i14" viewBox="0 0 14 14"><rect x="0" y="1" width="7" height="4.500" rx="2.200" fill="#f5d060" stroke="#b98512"/><rect x="6" y="1" width="7" height="4.500" rx="2.200" fill="#f5d060" stroke="#b98512"/><path d="M6 4v9l2-2 1.500 3 1.500-1-1.500-3h3z" fill="#fff" stroke="#333"/></svg></button>
    <button class="q w20" aria-label="Select underlay"><svg class="i14" viewBox="0 0 14 14"><path d="M0 12l6-8 4 8z" fill="#bfe0f5" stroke="#2d6ea8"/><path d="M0 9h9" stroke="#2d6ea8"/><path d="M7 1l5 5M12 1L7 6" stroke="#c4302b" stroke-width="1.800"/><path d="M8 6v7l2-1.500 3 1z" fill="#fff" stroke="#333"/></svg></button>
    <button class="q w20" aria-label="Select pinned"><svg class="i14" viewBox="0 0 14 14"><path d="M2 1h8v5H2zM0 7h11M5 7v6" fill="#e88a48" stroke="#9c3e17" stroke-width="1.300"/><path d="M8 5v8l2-2 3 1z" fill="#fff" stroke="#333"/></svg></button>
    <button class="q w20" aria-label="Select by face"><svg class="i14" viewBox="0 0 14 14"><path d="M1 3q3 0 7-2v10q-4 2-7 2z" fill="#a9d6f5" stroke="#2d78b8"/><path d="M7 1l5 5M12 1L7 6" stroke="#c4302b" stroke-width="1.800"/><path d="M8 6v7l2-2 3 1z" fill="#fff" stroke="#333"/></svg></button>
    <button class="q w20" aria-label="Drag on selection"><svg class="i14" viewBox="0 0 14 14"><path d="M4 0v9M0 4.500h9M3 1.500h2M1.500 3.500v2M7.500 3.500v2" stroke="#222" stroke-width="1.200"/><path d="M8 5v8l2-2 1.500 3 1-1-1-2.500H13z" fill="#fff" stroke="#333"/></svg></button>
    <button class="q w20" aria-label="Background processes"><svg class="i14" viewBox="0 0 14 14"><circle cx="7" cy="7" r="4.500" fill="none" stroke="#999" stroke-width="2.500" stroke-dasharray="2 1"/></svg></button>
    <button class="q filt" aria-label="Filter"><svg class="i14" viewBox="0 0 14 14"><path d="M1 1h12L8.500 7v6l-3-2V7z" fill="#b9bdc6" stroke="#444"/></svg>:0</button>
  </div>
</footer>
<nav class="taskbar">
  <button class="tk" aria-label="Start"><svg class="i16" viewBox="0 0 16 16"><path d="M1 3l6-1v5.500H1zM8 2l7-1v6.500H8zM1 8.500h6V14l-6-1zM8 8.500h7V15l-7-1z" fill="#f2f6f8"/></svg></button>
  <button class="tk" aria-label="File Explorer"><svg class="i20" viewBox="0 0 20 20"><path d="M1 3h6l2 2h10v12H1z" fill="#f0c64e"/><path d="M1 7h18v10H1z" fill="#fadf86"/><path d="M4 17v-5q0-1 1-1h10q1 0 1 1v5h-3v-3H7v3z" fill="#4aa3d8"/></svg></button>
  <button class="tk" aria-label="Opera"><svg class="i20" viewBox="0 0 20 20"><ellipse cx="10" cy="10" rx="9.500" ry="9.500" fill="#e8222d"/><ellipse cx="10" cy="10" rx="4" ry="6.500" fill="#22363c"/><path d="M14 3q5 7 0 14 5-2 5.500-7Q19 5 14 3z" fill="#a6121c"/></svg></button>
  <button class="tk" aria-label="PowerPoint"><svg class="i20" viewBox="0 0 20 20"><path d="M9 3h10v14H9z" fill="#fff" stroke="#d04525"/><path d="M12 7h5M12 10h5M12 13h5" stroke="#d04525" stroke-width="1.500"/><path d="M1 3l11-2v18L1 17z" fill="#d04525"/><path d="M5 14V6.500h2.500a2.200 2.200 0 0 1 0 4.500H5" fill="none" stroke="#fff" stroke-width="1.600"/></svg></button>
  <button class="tk" aria-label="Word"><svg class="i20" viewBox="0 0 20 20"><path d="M9 3h10v14H9z" fill="#fff" stroke="#2a5699"/><path d="M12 6h6M12 8.500h6M12 11h6M12 13.500h6" stroke="#2a5699"/><path d="M1 3l11-2v18L1 17z" fill="#2a5699"/><path d="M3 7l1.500 6.500L6.500 7l2 6.500L10 7" fill="none" stroke="#fff" stroke-width="1.300"/></svg></button>
  <button class="task cur"><svg class="i20" viewBox="0 0 20 20"><rect width="20" height="20" fill="#dbe9f6"/><path d="M5 2h6.500a4.500 4.500 0 0 1 2 8.500L17 18h-4.500L9.500 11.500V18H5z" fill="#1e5ea6"/><path d="M9 5.500h2a1.500 1.500 0 0 1 0 3.500H9z" fill="#dbe9f6"/></svg>Autodesk Revit 202...</button>
  <button class="task"><svg class="i20" viewBox="0 0 20 20"><circle cx="10" cy="10" r="9" fill="#fff"/><path d="M2.200 5.500A9 9 0 0 1 17.800 5.500H10L6.500 12z" fill="#e04336"/><path d="M2.200 5.500A9 9 0 0 0 9.500 19l4-7H6.500z" fill="#35a352"/><path d="M17.800 5.500A9 9 0 0 1 9.500 19l4-7L12 5.500z" fill="#fbc21e"/><circle cx="10" cy="10" r="4.300" fill="#4a85ee" stroke="#fff" stroke-width="1.200"/></svg>Inbox (45) - mehta...</button>
  <div class="tray">
    <button class="q w20" aria-label="Hidden icons"><svg class="i14" viewBox="0 0 14 14"><path d="M2 9l5-5 5 5" fill="none" stroke="#e8eef2" stroke-width="1.300"/></svg></button>
    <button class="q w20" aria-label="Microphone"><svg class="i14" viewBox="0 0 14 14"><rect x="4" y="0" width="6" height="10" rx="2" fill="#f2f5f8"/><path d="M3 8q0 3 4 3t4-3M7 11v2M4 13.500h6" fill="none" stroke="#f2f5f8"/></svg></button>
    <button class="q w20" aria-label="Battery"><svg class="i14" viewBox="0 0 14 14"><path d="M3 4h10v7H3z" fill="#f2f5f8"/><path d="M13.500 6v3M1 2v5h3" fill="none" stroke="#f2f5f8" stroke-width="1.500"/></svg></button>
    <button class="q w20" aria-label="Network"><svg class="i14" viewBox="0 0 14 14"><path d="M1 12Q2 3 12 2M4 12.500Q5 6.500 12 5.500M7 13q.5-4 5-4.500" fill="none" stroke="#c2ccd6" stroke-width="1.200"/><circle cx="11" cy="12" r="1.500" fill="#fff"/></svg></button>
    <button class="q w20" aria-label="Volume"><svg class="i14" viewBox="0 0 14 14"><path d="M1 5h2l3-3v10L3 9H1z" fill="none" stroke="#e8eef2"/><path d="M8 5q1 2 0 4M10 3.500q2 3.500 0 7M12 2q3 5 0 10" fill="none" stroke="#e8eef2"/></svg></button>
    <button class="two lang">ENG<br>IN</button>
    <button class="two clock">19:59<br>28-01-2021</button>
    <button class="q note" aria-label="Notifications"><svg class="i14" viewBox="0 0 14 14"><path d="M1 1h12v10H9.500v3l-3-3H1z" fill="none" stroke="#eef2f6" stroke-width="1.200"/></svg></button>
  </div>
</nav>
</body>
</html>
```
FILE: styles.css
```css
* { box-sizing: border-box; }
body {
  margin: 0; height: 100vh; display: flex; flex-direction: column; overflow: hidden;
  font-family: Roboto, "Open Sans", sans-serif; font-size: 10px; line-height: 14px;
  color: #2b2b2b; background: #ebecea;
}
button, input, select { font: inherit; color: inherit; }
button { border: 0; background: none; padding: 0; margin: 0; }
h1, h2 { margin: 0; font-size: inherit; font-weight: normal; }
svg { display: block; flex: none; }
.i12 { width: 12px; height: 12px; }
.i14 { width: 14px; height: 14px; }
.i16 { width: 16px; height: 16px; }
.i20 { width: 20px; height: 20px; }
.i24 { width: 24px; height: 24px; }
.i30 { width: 30px; height: 30px; }
.w8 { width: 8px; } .w10 { width: 10px; } .w14 { width: 14px; } .w20 { width: 20px; }
.w22 { width: 22px; } .w26 { width: 26px; }
.w30 { width: 30px; } .w32 { width: 32px; } .w34 { width: 34px; } .w36 { width: 36px; }
.w38 { width: 38px; } .w40 { width: 40px; } .w42 { width: 42px; } .w44 { width: 44px; }
.w48 { width: 48px; } .w52 { width: 52px; } .w72 { width: 72px; }

.dd { display: block; border: 2px solid transparent; border-top: 3px solid #333; border-bottom: 0; width: 4px; height: 3px; flex: none; }
.dd.dim { border-top-color: #888; }
.dd.lg { border-width: 4px 3px 0; width: 6px; height: 4px; }
.dd.bar { position: relative; border-width: 4px 4px 0; width: 8px; height: 4px; }
.dd.bar::before { content: ""; position: absolute; left: -4px; top: -6px; width: 8px; height: 1px; background: #333; }
.ddl { display: block; border: 3px solid transparent; border-right: 4px solid #222; border-left: 0; }
.q { display: flex; align-items: center; justify-content: center; flex: none; }

.titlebar { display: flex; height: 24px; background: #c9cac8; flex: none; }
.qat, .account, .wctl { display: flex; align-items: center; height: 21px; flex: none; }
.sep { width: 6px; height: 18px; border-left: 1px solid #b8b9b7; flex: none; }
.boxed { height: 19px; background: #b9dcf6; border: 1px solid #3a86c8; }
.title { flex: 1; text-align: center; line-height: 18px; white-space: nowrap; color: #3a3a3a; }
.user { display: flex; align-items: center; gap: 2px; width: 78px; padding-left: 2px; color: #333; white-space: nowrap; }
.wctl { margin-left: 46px; }

.tabs { display: flex; height: 17px; background: #c9cac8; flex: none; padding-left: 1px; }
.tab { padding: 0 8px; color: #3a3a3a; white-space: nowrap; }
.tab.file { width: 37px; background: #1a77ae; color: #fff; margin-right: 2px; }
.tab.active { background: #eeefed; width: 68px; }
.ribmin { margin-left: 16px; gap: 4px; }
.ribi { width: 13px; height: 8px; }

.ribbon { display: flex; height: 81px; background: #ebecea; border-bottom: 1px solid #cfd0ce; flex: none; }
.panel { display: flex; flex-direction: column; border-right: 1px solid #d5d6d4; padding: 0 1px; flex: none; }
.panel.last { border-right: 0; }
.tools { display: flex; height: 64px; padding-top: 5px; }
.select { width: 49px; }
.modify { width: 36px; height: 60px; margin: -2px 0 0 5px; padding-top: 1px; background: #a6cdee; border: 1px solid #3e85c4; }
.big { position: relative; display: flex; flex-direction: column; align-items: center; line-height: 13px; text-align: center; white-space: nowrap; }
.big svg { margin-bottom: 6px; }
.big .dd { margin-top: 2px; }
.side .dd { position: absolute; right: 0; bottom: 12px; }
button:disabled { color: #b2b3b2; }
.stack { display: flex; flex-direction: column; gap: 6px; padding: 1px 5px 0 3px; }
.stack.two { padding-top: 11px; }
.small { display: flex; align-items: center; gap: 4px; height: 14px; white-space: nowrap; text-align: left; }
.small .dd { margin-left: 3px; }
.ptitle { display: flex; align-items: center; justify-content: center; gap: 5px; height: 16px; color: #3a3a3a; }
.options { height: 23px; background: #ebecea; border-bottom: 1px solid #d5d6d4; flex: none; }

.work { display: flex; flex: 1; min-height: 0; background: #f0f0ef; }
.props { width: 232px; flex: none; display: flex; flex-direction: column; border-right: 2px solid #d0d1cf; padding: 0 2px 0 1px; background: #eeefee; }
.phead { display: flex; justify-content: space-between; align-items: center; height: 18px; padding: 0 1px; flex: none; color: #3a3a3a; }
.typesel { display: flex; align-items: center; height: 58px; border: 1px solid #d4d5d3; border-bottom: 0; padding: 0 0 0 2px; flex: none; }
.thumb { display: flex; align-items: center; justify-content: center; width: 55px; height: 55px; border: 1px solid #cccdcb; }
.tname { flex: 1; text-align: left; padding-left: 4px; }
.pinst { display: flex; height: 18px; flex: none; }
.combo { position: relative; display: block; width: 163px; }
.combo select { appearance: none; width: 100%; height: 18px; border: 1px solid #bdbebc; background: #dfe0de; padding: 0 2px; border-radius: 0; }
.combo .chev { position: absolute; right: 3px; top: 6px; }
.chev { width: 8px; height: 7px; }
.edtype { display: flex; align-items: center; gap: 2px; margin-left: 5px; }
.pgrid { display: flex; flex: 1; min-height: 0; margin-top: 1px; border-bottom: 1px solid #d0d1cf; background: #fdfefd; overflow: hidden; }
.pgrid table { width: 213px; border-collapse: collapse; table-layout: fixed; align-self: flex-start; }
.c1 { width: 101px; } .c2 { width: 102px; } .c3 { width: 10px; }
.pgrid tr { height: 16px; }
.pgrid td, .pgrid th { padding: 0 0 0 2px; height: 16px; line-height: 14px; font-weight: normal; text-align: left; border: 1px dashed #c3c4c2; white-space: nowrap; }
.pgrid th { padding-left: 7px; border-left: 0; }
.pgrid td:nth-child(2) { padding: 0 0 0 1px; }
.pgrid .grp th { background: #d8d9d7; padding-left: 1px; border: 0; position: relative; }
.up { position: absolute; right: 4px; top: 2px; width: 6px; height: 8px; }
.off { color: #858685; }
.boxin { display: block; width: 100%; height: 15px; border: 1px solid #222; padding: 0 4px 1px; background: #fff; }
.edit { display: block; width: 100%; height: 14px; line-height: 12px; background: #dfe0df; border: 1px solid #a9aaa9; }
input[type=checkbox] { appearance: none; display: block; width: 11px; height: 11px; margin: 0 1px; border: 1px solid #444; background: #fff; }
input[type=checkbox]:disabled { border-color: #c8c8c8; }
.vsb { display: flex; flex-direction: column; align-items: center; justify-content: space-between; width: 14px; margin-left: 1px; padding: 4px 0; background: #efefee; gap: 4px; }
.pthumb { flex: none; width: 13px; height: 271px; margin-bottom: auto; background: #cbcccb; }
.pfoot { display: flex; justify-content: space-between; align-items: center; height: 23px; padding-bottom: 3px; flex: none; }
.pfoot a { color: #2869ae; padding-left: 2px; }
.apply { width: 57px; height: 17px; background: #cfd0cf; border: 1px solid #c3c4c3; margin-right: 1px; }
.apply:disabled { color: #8e8f8e; }

.view { flex: 1; min-width: 0; display: flex; flex-direction: column; background: #fdfefd; border-bottom: 2px solid #d5d6d4; }
.vtabs { display: flex; height: 18px; background: #c9cac8; flex: none; }
.vtab { display: flex; align-items: center; gap: 5px; width: 107px; padding: 0 4px; color: #444; }
.vtab.on { background: #fdfefd; color: #222; }
.vtab .x { margin-left: auto; }
.vmore { margin-left: auto; margin-right: 2px; }
.stage { display: flex; flex: 1; min-height: 0; }
.model { flex: 1; min-width: 0; height: 100%; }
.cube { font-family: "Liberation Sans", sans-serif; font-size: 6px; font-weight: bold; fill: #8e9297; }
.dimc { font-size: 5px; fill: #a2a6aa; }
.vsb.wide { margin-left: 0; width: 17px; padding-right: 3px; }
.mthumb { width: 12px; height: 14px; background: #c8c9c8; }
.vcb { display: flex; align-items: center; height: 15px; background: #f0f0ef; flex: none; }
.scale { width: 61px; padding-left: 4px; text-align: center; }
.vicons { display: grid; grid-template-columns: repeat(14, 1fr); width: 232px; }
.v { display: flex; justify-content: center; }
.hsb { flex: 1; display: flex; align-items: center; justify-content: space-between; padding: 0 3px 0 4px; }
.hthumb { width: 14px; height: 13px; background: #c8c9c8; }
.grip { margin-right: 4px; }

.browser { width: 197px; flex: none; border-left: 3px solid #d0d1cf; background: #fdfefd; display: flex; flex-direction: column; }
.browser .phead { background: #eeefee; }
.treebox { position: relative; margin-top: -1px; }
.guides { position: absolute; left: 0; top: 0; width: 194px; height: 294px; }
.tree { position: relative; list-style: none; margin: 0; padding: 0; display: grid; grid-auto-rows: 1fr; height: 294px; }
.tree li { display: flex; align-items: center; gap: 4px; white-space: nowrap; }
.d0 { padding-left: 1px; } .d0 .i14 { margin-left: 2px; }
.tree .leaf { padding-left: 14px; }
.d1 { padding-left: 19px; } .d1 .pm { margin-right: 5px; }
.d2 { padding-left: 55px; }
.sel { background: #dedfde; padding: 0 2px; margin: 0 -2px; line-height: 13px; }
.pm { position: relative; width: 9px; height: 9px; border: 1px solid #a6a8aa; background: #f4f5f7; flex: none; }
.pm::before { content: ""; position: absolute; left: 1px; top: 3px; width: 5px; height: 1px; background: #555; }
.plus::after { content: ""; position: absolute; left: 3px; top: 1px; width: 1px; height: 5px; background: #555; }

.status { display: flex; align-items: center; height: 26px; padding-bottom: 4px; background: #c9cac8; flex: none; }
.msg { width: 459px; padding-left: 1px; white-space: nowrap; }
.s1, .s2 { width: 170px; margin-left: 5px; }
.s1 select, .s2 select { height: 15px; background: #fbfcfb; border: 0; color: #8a8b8a; display: block; }
.status .combo .chev { top: 5px; }
.gapl { margin-left: 5px; } .gapm { margin-left: 15px; }
.zero { margin-left: 3px; }
.selopts { display: flex; margin-left: auto; margin-right: 51px; }
.filt { padding-left: 2px; }

.taskbar { display: flex; height: 28px; background: linear-gradient(90deg, #20343a, #1c333d 45%, #15264a 85%, #17254a); color: #e8eef2; flex: none; }
.tk { width: 42px; display: flex; align-items: center; justify-content: center; }
.tk:first-child { width: 40px; }
.task { display: flex; align-items: center; gap: 3px; height: 28px; width: 133px; padding: 0 8px; border-bottom: 3px solid #6fb1e4; white-space: nowrap; margin-right: 4px; }
.task.cur { background: #4c6068; }
.task + .task { width: 127px; padding: 0 5px; }
.tray { display: flex; margin-left: auto; margin-right: 3px; border-right: 1px solid #44506c; padding-right: 28px; }
.two { line-height: 15px; text-align: center; color: #e8eef2; padding-bottom: 7px; }
.lang { width: 30px; } .clock { width: 58px; } .note { width: 16px; }
```
